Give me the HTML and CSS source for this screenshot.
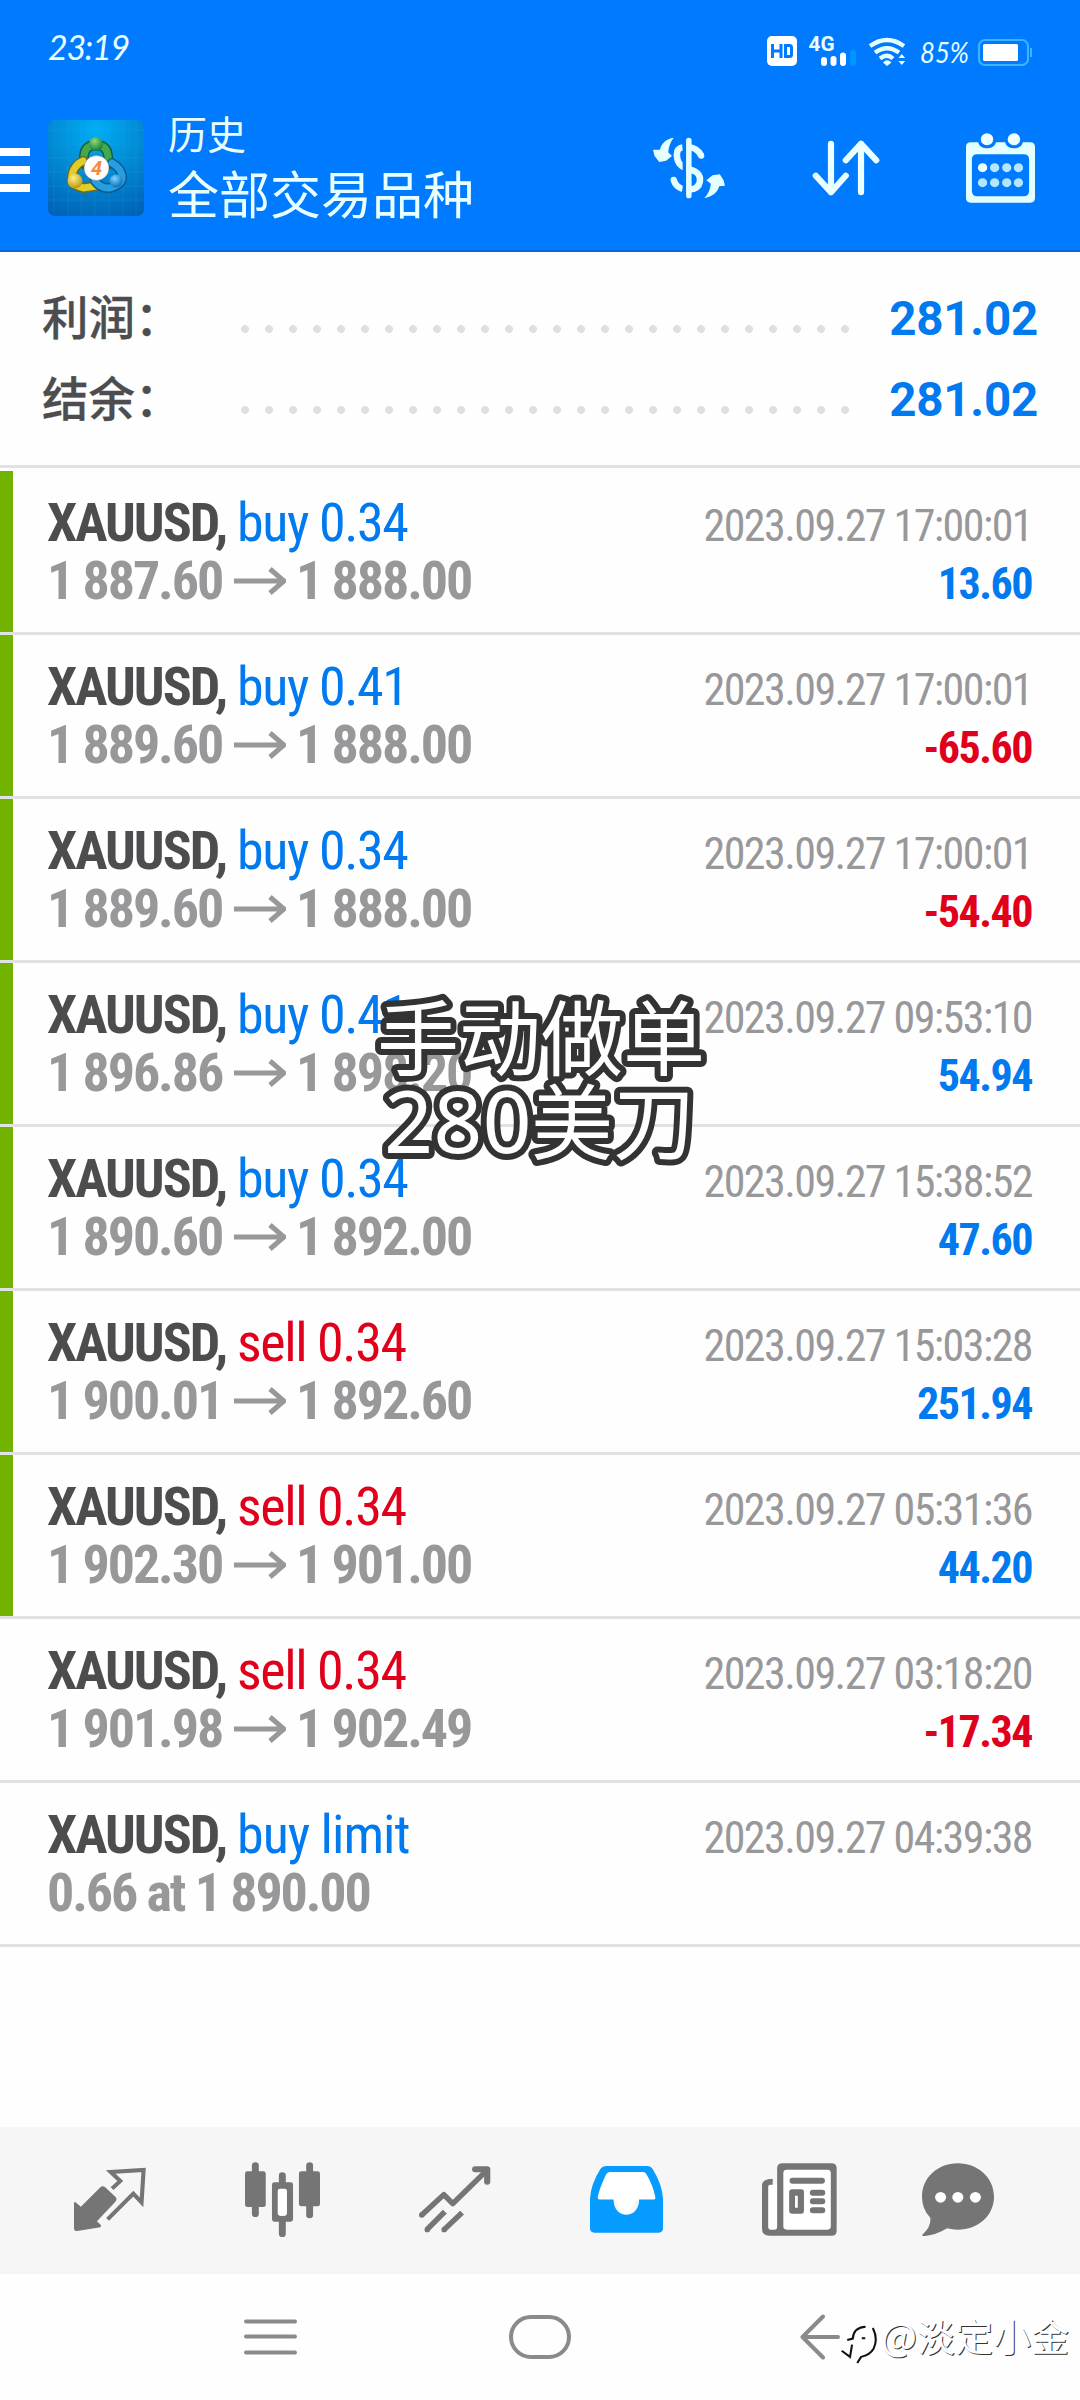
FILE: index.html
```html
<!DOCTYPE html>
<html lang="zh">
<head>
<meta charset="utf-8">
<title>历史</title>
<link rel="stylesheet" href="styles.css">
</head>
<body>
<svg width="0" height="0" class="defs">
  <symbol id="arrow" viewBox="0 0 52 28"><path d="M0 14H50M36 2L50 14L36 26" fill="none" stroke="currentColor" stroke-width="5"/></symbol>
</svg>
<header class="header">
  <div class="status">
    <span class="clock">23:19</span>
    <svg class="status-icons" width="270" height="40" viewBox="765 30 270 40">
      <rect x="767" y="36" width="30" height="30" rx="5" fill="#fff"/>
      <path d="M772.500 44v14M781 44v14M772.500 51H781M785.500 45.500h4q2 0 2 2v7q0 2-2 2h-4z" fill="none" stroke="#007aff" stroke-width="3"/>
      <text x="808.500" y="50.500" class="net" textLength="26" lengthAdjust="spacingAndGlyphs">4G</text>
      <path d="M824 60v3M833.500 59v4M843 55.500v7.500" stroke="#fff" stroke-width="6" stroke-linecap="round"/>
      <path d="M853 53v10" stroke="#0096ff" stroke-width="6" stroke-linecap="round"/>
      <g fill="none" stroke="#e8ffff" stroke-width="4.200">
        <path d="M870 46Q887 34 904 46M875 52.500Q887 44 899 52.500M880 58.500Q887 53 893 58.500"/>
      </g>
      <path d="M883 62.500Q887 58 891.500 62.500L887 66zM898.500 58l3.300-4 3.300 4zM898.500 61l3.300 4 3.300-4z" fill="#e8ffff"/>
      <text x="920" y="62.500" class="percent" textLength="49" lengthAdjust="spacingAndGlyphs">85%</text>
      <rect x="979" y="40" width="49" height="25" rx="6" fill="none" stroke="#3db4ff" stroke-width="2.200"/>
      <rect x="983" y="44" width="35" height="17" rx="1.500" fill="#fff"/>
      <path d="M1031 48v9" stroke="#3db4ff" stroke-width="2"/>
    </svg>
  </div>
  <div class="toolbar">
    <div class="menu"><i></i><i></i><i></i></div>
    <svg class="logo" width="96" height="96" viewBox="0 0 96 96">
      <defs>
        <radialGradient id="bg" cx=".5" cy=".1" r="1"><stop offset="0" stop-color="#00aef6"/><stop offset=".5" stop-color="#0288d2"/><stop offset="1" stop-color="#0060b4"/></radialGradient>
        <radialGradient id="gr" cx=".4" cy=".3" r=".7"><stop offset="0" stop-color="#8fd87c"/><stop offset="1" stop-color="#12803a"/></radialGradient>
        <radialGradient id="ye" cx=".4" cy=".3" r=".7"><stop offset="0" stop-color="#fff08a"/><stop offset="1" stop-color="#b99a0c"/></radialGradient>
        <radialGradient id="bl" cx=".4" cy=".3" r=".7"><stop offset="0" stop-color="#7cd4ff"/><stop offset="1" stop-color="#0c6fb8"/></radialGradient>
      </defs>
      <rect width="96" height="96" rx="7" fill="url(#bg)"/>
      <path d="M6 0v96M20 0v96M33 0v96M47 0v96M61 0v96M75 0v96M88 0v96M0 10h96M0 24h96M0 38h96M0 52h96M0 66h96M0 80h96" stroke="#36b4ec" stroke-opacity=".16"/>
      <g fill="none" stroke-linecap="round">
        <path d="M36 44V36Q37 25 48 25T60 36L61 44" stroke="#155d3c" stroke-width="10"/>
        <path d="M36 43V36Q37 25 48 25T60 36L61 43" stroke="#43a84e" stroke-width="7"/>
        <path d="M35 41Q26 45 24 55T36 68L49 66" stroke="#6c6920" stroke-width="10"/>
        <path d="M35 41Q26 45 24 55T36 68L48 66" stroke="#e1cc28" stroke-width="7"/>
        <path d="M64 43Q73 48 74 56T62 68Q53 69 47 61" stroke="#0b5a93" stroke-width="10"/>
        <path d="M64 43Q73 48 74 56T62 68Q53 69 47 61" stroke="#279fdf" stroke-width="7"/>
      </g>
      <circle cx="48" cy="24" r="7" fill="url(#gr)"/>
      <circle cx="27" cy="61" r="7.500" fill="url(#ye)"/>
      <circle cx="68" cy="61" r="6.500" fill="url(#bl)"/>
      <circle cx="48.500" cy="48" r="12.500" fill="#fff" stroke="#777" stroke-opacity=".5"/>
      <text x="48.500" y="55" text-anchor="middle" class="logo-four">4</text>
    </svg>
    <div class="titles"><div class="sub">历史</div><div class="main">全部交易品种</div></div>
    <div class="actions">
      <svg width="74" height="64" viewBox="328 408 215 192" preserveAspectRatio="none">
        <path d="M471 467C462 448 450 444 436 441M417 442C400 444 398 460 402 478C406 496 418 501 436 508C460 514 470 524 467 545C464 563 452 568 436 569M417 567C402 562 395 554 391 540" fill="none" stroke="#e4ffff" stroke-width="19"/>
        <path d="M471 467h.1M391 539h.1" stroke="#e4ffff" stroke-width="18" stroke-linecap="round"/>
        <path d="M422 425V588" stroke="#007aff" stroke-width="10"/>
        <path d="M435 421V587" stroke="#e4ffff" stroke-width="16" stroke-linecap="round"/>
        <path d="M391 413C370 416 355 430 351 449L331 449L335 467L349 486L369 482L386 468L375 457C377 438 382 425 391 413ZM480 594C503 591 519 577 523 559L540 557L536 541L525 523L504 526L486 541L499 551C497 570 490 583 480 594Z" fill="#e4ffff"/>
      </svg>
      <svg width="68" height="56" viewBox="790 420 197 168" preserveAspectRatio="none">
        <path d="M845 431V577M801 527L845 577L888 527M932 577V431M888 481L932 431L976 481" fill="none" stroke="#eaffff" stroke-width="18" stroke-linecap="round" stroke-linejoin="round"/>
      </svg>
      <svg width="69" height="70" viewBox="1237 395 200 210" preserveAspectRatio="none">
        <path d="M1251 423H1272Q1277 441 1298 441T1324 423H1350Q1355 441 1376 441T1402 423H1423Q1437 423 1437 437V590Q1437 604 1423 604H1251Q1237 604 1237 590V437Q1237 423 1251 423ZM1270 459Q1254 459 1254 475V568Q1254 585 1270 585H1404Q1420 585 1420 568V475Q1420 459 1404 459Z" fill="#e4ffff" fill-rule="evenodd"/>
        <g fill="#efffff"><circle cx="1298" cy="414" r="18"/><circle cx="1376" cy="414" r="18"/><circle cx="1285" cy="499" r="13.500"/></g>
        <g fill="#b4e6ff"><circle cx="1320" cy="499" r="13.500"/><circle cx="1355" cy="499" r="13.500"/><circle cx="1389" cy="499" r="13.500"/><circle cx="1285" cy="544" r="13.500"/><circle cx="1320" cy="544" r="13.500"/><circle cx="1355" cy="544" r="13.500"/><circle cx="1389" cy="544" r="13.500"/></g>
      </svg>
    </div>
  </div>
</header>
<section class="summary">
  <div class="sum-row"><span class="label">利润：</span><span class="dots"></span><b class="total">281.02</b></div>
  <div class="sum-row"><span class="label">结余：</span><span class="dots"></span><b class="total">281.02</b></div>
</section>
<main class="deals">
  <div class="deal closed"><div class="line"><b class="sym">XAUUSD,</b><span class="side buy">buy 0.34</span><span class="date">2023.09.27 17:00:01</span></div><div class="line"><b class="price">1 887.60</b><svg class="to"><use href="#arrow"/></svg><b class="price">1 888.00</b><b class="profit buy">13.60</b></div></div>
  <div class="deal closed"><div class="line"><b class="sym">XAUUSD,</b><span class="side buy">buy 0.41</span><span class="date">2023.09.27 17:00:01</span></div><div class="line"><b class="price">1 889.60</b><svg class="to"><use href="#arrow"/></svg><b class="price">1 888.00</b><b class="profit sell">-65.60</b></div></div>
  <div class="deal closed"><div class="line"><b class="sym">XAUUSD,</b><span class="side buy">buy 0.34</span><span class="date">2023.09.27 17:00:01</span></div><div class="line"><b class="price">1 889.60</b><svg class="to"><use href="#arrow"/></svg><b class="price">1 888.00</b><b class="profit sell">-54.40</b></div></div>
  <div class="deal closed"><div class="line"><b class="sym">XAUUSD,</b><span class="side buy">buy 0.41</span><span class="date">2023.09.27 09:53:10</span></div><div class="line"><b class="price">1 896.86</b><svg class="to"><use href="#arrow"/></svg><b class="price">1 898.20</b><b class="profit buy">54.94</b></div></div>
  <div class="deal closed"><div class="line"><b class="sym">XAUUSD,</b><span class="side buy">buy 0.34</span><span class="date">2023.09.27 15:38:52</span></div><div class="line"><b class="price">1 890.60</b><svg class="to"><use href="#arrow"/></svg><b class="price">1 892.00</b><b class="profit buy">47.60</b></div></div>
  <div class="deal closed"><div class="line"><b class="sym">XAUUSD,</b><span class="side sell">sell 0.34</span><span class="date">2023.09.27 15:03:28</span></div><div class="line"><b class="price">1 900.01</b><svg class="to"><use href="#arrow"/></svg><b class="price">1 892.60</b><b class="profit buy">251.94</b></div></div>
  <div class="deal closed"><div class="line"><b class="sym">XAUUSD,</b><span class="side sell">sell 0.34</span><span class="date">2023.09.27 05:31:36</span></div><div class="line"><b class="price">1 902.30</b><svg class="to"><use href="#arrow"/></svg><b class="price">1 901.00</b><b class="profit buy">44.20</b></div></div>
  <div class="deal"><div class="line"><b class="sym">XAUUSD,</b><span class="side sell">sell 0.34</span><span class="date">2023.09.27 03:18:20</span></div><div class="line"><b class="price">1 901.98</b><svg class="to"><use href="#arrow"/></svg><b class="price">1 902.49</b><b class="profit sell">-17.34</b></div></div>
  <div class="deal"><div class="line"><b class="sym">XAUUSD,</b><span class="side buy limit">buy limit</span><span class="date">2023.09.27 04:39:38</span></div><div class="line"><b class="price">0.66 at 1 890.00</b></div></div>
</main>
<nav class="tabs">
  <svg width="72" height="65" viewBox="215 174 210 195" preserveAspectRatio="none">
    <path d="M292 235Q299 228 306 235L337 265Q342 271 337 277L282 337L294 349L292 355L224 366Q215 367 215 359V282Q217 276 222 282L235 293Z" fill="#757575"/>
    <path d="M326 239L350 216L322 189L418 183L412 280L388 254L313 331" fill="none" stroke="#757575" stroke-width="12"/>
  </svg>
  <svg width="75" height="75" viewBox="709 157 217 225" preserveAspectRatio="none">
    <path d="M739 168V312M896 168V316M817 198V228M817 328V372" stroke="#757575" stroke-width="20" stroke-linecap="round"/>
    <rect x="709" y="185" width="60" height="107" rx="7" fill="#757575"/><rect x="865" y="185" width="61" height="105" rx="7" fill="#757575"/>
    <path d="M794 218H841Q848 218 848 225V329Q848 336 841 336H794Q787 336 787 329V225Q787 218 794 218ZM811 237Q804 237 804 244V311Q804 318 811 318H823Q830 318 830 311V244Q830 237 823 237Z" fill="#757575" fill-rule="evenodd"/>
    <rect x="804" y="237" width="26" height="81" rx="7" fill="#fff"/>
  </svg>
  <svg width="72" height="67" viewBox="1213 167 209 201" preserveAspectRatio="none">
    <path d="M1221 314L1285 253L1311 280L1406 184M1236 358L1288 304M1286 358L1338 307" fill="none" stroke="#757575" stroke-width="16" stroke-linejoin="round"/><path d="M1221 314h.1M1237 358h.1M1286 358h.1" stroke="#757575" stroke-width="16" stroke-linecap="round"/>
    <path d="M1376 177H1411V214" fill="none" stroke="#757575" stroke-width="18" stroke-linecap="round" stroke-linejoin="round"/>
  </svg>
  <svg width="73" height="67" viewBox="146 167 211 200" preserveAspectRatio="none">
    <path d="M192 180H312L342 268H280L260 318H240L220 268H162Z" fill="#fff"/>
    <path d="M194 167H310Q322 167 327 176Q354 220 357 264V353Q357 366 344 366H159Q146 366 146 353V264Q149 220 176 176Q182 167 194 167ZM203 185Q196 185 192 193Q174 232 168 260Q168 267 174 267H214C214 328 288 328 288 267H328Q336 267 335 260Q328 225 310 193Q307 185 299 185Z" fill="#069bff" fill-rule="evenodd"/>
  </svg>
  <svg width="75" height="73" viewBox="646 157 218 219" preserveAspectRatio="none">
    <rect x="700" y="170" width="155" height="195" fill="#fff"/><rect x="660" y="222" width="34" height="140" fill="#fff"/>
    <path d="M706 158H848Q863 158 863 173V360Q863 375 848 375H668Q646 375 646 354V224Q646 204 677 204V222H670Q664 222 664 228V350Q664 357 671 357H682Q690 357 690 349V173Q690 158 706 158ZM718 177Q708 177 708 187V347Q708 357 718 357H836Q846 357 846 347V187Q846 177 836 177Z" fill="#757575" fill-rule="evenodd"/>
    <path d="M735 210H820M794 246H821M794 272H821M794 299H821" stroke="#757575" stroke-width="18" stroke-linecap="round"/>
    <path d="M734 236H760Q768 236 768 244V300Q768 309 760 309H734Q725 309 725 300V244Q725 236 734 236ZM742 255V291H750V255Z" fill="#757575" fill-rule="evenodd"/>
  </svg>
  <svg class="chat" width="72" height="73" viewBox="1109 157 209 219" preserveAspectRatio="none">
    <path d="M1213 158C1272 158 1318 202 1318 258S1272 357 1213 357Q1196 357 1182 353Q1150 373 1118 376Q1104 376 1113 369Q1136 347 1133 321Q1109 295 1109 258C1109 202 1154 158 1213 158Z" fill="#757575"/>
    <g fill="#fff"><circle cx="1163" cy="260" r="16"/><circle cx="1213" cy="260" r="16"/><circle cx="1264" cy="260" r="16"/></g>
  </svg>
</nav>
<div class="sysnav">
  <svg width="53" height="36" viewBox="0 0 53 36"><path d="M2 2.500H51M2 17.500H51M2 33.500H51" stroke="#8a8a8a" stroke-width="4" stroke-linecap="round"/></svg>
  <svg class="home" width="62" height="44" viewBox="0 0 62 44"><rect x="2" y="2" width="58" height="40" rx="20" fill="none" stroke="#8a8a8a" stroke-width="4"/></svg>
  <svg class="back" width="40" height="46" viewBox="0 0 40 46"><path d="M23 2.500L2.500 23L23 43.500M2.500 23H38" fill="none" stroke="#8a8a8a" stroke-width="4" stroke-linecap="round" stroke-linejoin="round"/></svg>
</div>
<svg class="caption" width="390" height="240" viewBox="345 955 390 240">
  <text x="377" y="1069">手动做单</text>
  <text x="384" y="1153" class="num">280</text>
  <text x="531" y="1153">美刀</text>
</svg>
<div class="watermark">
  <svg width="36" height="40" viewBox="874 645 104 118" preserveAspectRatio="none"><path d="M892 692L908 688Q910 655 945 653M906 706L900 742L876 724M934 687H944" fill="none" stroke="#111" stroke-width="6"/><path d="M966 657Q982 690 968 718Q958 736 932 742L921 760" fill="none" stroke="#111" stroke-width="6"/></svg>
  <span>@淡定小金</span>
</div>
</body>
</html>
```
FILE: styles.css
```css
* { box-sizing: border-box; }
body { margin: 0; width: 1080px; height: 2400px; position: relative; overflow: hidden; display: flex; flex-direction: column; background: #fefefe; font-family: Roboto, "Noto Sans CJK SC", sans-serif; }
svg { display: block; flex: none; }
.defs { position: absolute; }

.header { height: 252px; flex: none; background: #007aff; border-bottom: 2px solid #0a66cc; color: #e8ffff; }
.status { height: 100px; display: flex; justify-content: space-between; padding: 30px 45px 0 48px; }
.clock { font: italic 34px/34px Lato, sans-serif; letter-spacing: -1.3px; }
.net { font: 700 20px Roboto, sans-serif; fill: #e8ffff; }
.percent { font: italic 29px Lato, sans-serif; fill: #e8ffff; }
.toolbar { display: flex; align-items: flex-start; }
.menu { width: 30px; margin: 48px 18px 0 0; display: flex; flex-direction: column; gap: 10px; }
.menu i { height: 8px; background: #fff; }
.logo { margin-top: 20px; }
.logo-four { font: italic 700 20px Roboto, sans-serif; fill: #f58a3c; }
.titles { margin: 8px 0 0 24px; font-family: "Noto Sans CJK SC", sans-serif; white-space: nowrap; }
.sub { font-size: 39px; line-height: 48px; }
.main { font-size: 51px; line-height: 72px; }
.actions { flex: 1; display: flex; align-items: center; justify-content: flex-end; gap: 86px; height: 136px; padding-right: 45px; }

.summary { height: 219px; flex: none; padding-top: 22px; background: linear-gradient(#e2e2e2, #e2e2e2) 0 213px / 100% 3px no-repeat; }
.sum-row { height: 81px; display: flex; align-items: center; padding: 0 42px 0 42px; }
.label { width: 198px; font: 500 46.5px/81px "Noto Sans CJK SC", sans-serif; color: #4d4d4f; -webkit-text-stroke: .3px #4d4d4f; }
.dots { width: 624px; height: 8px; margin-top: 28px; background: radial-gradient(circle at 5px 4px, #e0e0e0 3.700px, transparent 4.300px) 0 0 / 24px 8px; }
.total { margin: 8px 0 0 auto; font-size: 47.5px; color: #007aee; letter-spacing: -.2px; }

.deal { height: 164px; border-bottom: 3px solid #e2e2e2; padding: 23px 48px 0 47px; }
.closed { background: linear-gradient(#72b200, #72b200) 0 0 / 13px 100% no-repeat; }
.line { height: 58px; display: flex; align-items: baseline; white-space: nowrap; font-family: "Roboto Condensed", Roboto, sans-serif; font-stretch: 75%; font-size: 54px; line-height: 58px; }
.sym { width: 190px; color: #4d4d4f; letter-spacing: -2px; }
.side { font-size: 54px; letter-spacing: -1.4px; }
.limit { letter-spacing: -1px; }
.buy { color: #007aee; }
.sell { color: #e0001b; }
.date, .profit { margin-left: auto; font-size: 44px; }
.date { color: #98989a; letter-spacing: -1.55px; }
.profit { letter-spacing: -1.5px; }
.price { color: #98989a; letter-spacing: -2.1px; }
.to { width: 52px; height: 28px; margin: 0 10px 0 12px; align-self: center; color: #98989a; }

.tabs { height: 147px; margin-top: 180px; flex: none; background: #f6f6f6; display: flex; align-items: center; gap: 99px; padding: 0 0 2px 74px; }
.chat { margin-left: -14px; }
.sysnav { height: 126px; flex: none; display: flex; align-items: center; padding: 0 0 0 244px; }
.home { margin-left: 212px; }
.back { margin-left: 229px; }

.caption { position: absolute; left: 345px; top: 955px; overflow: visible; }
.caption text { font: 400 82px "Noto Sans CJK SC", sans-serif; fill: #fff; stroke: #333; stroke-width: 12px; stroke-linejoin: round; paint-order: stroke fill; }
.caption .num { font: 400 86px "Noto Sans", sans-serif; }
.watermark { position: absolute; left: 841px; top: 2306px; display: flex; align-items: center; gap: 4px; font: 400 38px/54px "Noto Sans CJK SC", sans-serif; color: #fff; text-shadow: 1px 1px 0 #333; white-space: nowrap; }
.watermark svg { margin-top: 18px; }
```
